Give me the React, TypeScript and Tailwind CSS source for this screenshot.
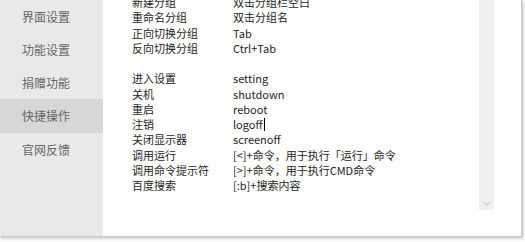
import React from 'react'

const menu = ['界面设置', '功能设置', '捐赠功能', '快捷操作', '官网反馈']

const rows: Array<[string, string] | null> = [
  ['新建分组', '双击分组栏空白'],
  ['重命名分组', '双击分组名'],
  ['正向切换分组', 'Tab'],
  ['反向切换分组', 'Ctrl+Tab'],
  null,
  ['进入设置', 'setting'],
  ['关机', 'shutdown'],
  ['重启', 'reboot'],
  ['注销', 'logoff'],
  ['关闭显示器', 'screenoff'],
  ['调用运行', '[<]+命令，用于执行「运行」命令'],
  ['调用命令提示符', '[>]+命令，用于执行CMD命令'],
  ['百度搜索', '[:b]+搜索内容'],
]

export default function App() {
  return (
    <div className="w-[525px] h-[242px] bg-[#fbfbfb] overflow-hidden" style={{ fontFamily: '"Noto Sans CJK SC", "Noto Sans", sans-serif' }}>
      <div className="flex w-[522px] h-[237px] bg-white border-r border-b border-[#c9c9c9] shadow-[1px_1px_3px_rgba(0,0,0,0.25)]">
        {/* Sidebar */}
        <div className="w-[103px] h-full bg-[#e9e9e9] flex flex-col">
          {menu.map((m, i) => (
            <div
              key={m}
              className={`h-[33px] flex items-center pl-[22px] text-[12px] text-[#666] ${i === 3 ? 'bg-[#d7d7d7] h-[34px]' : ''}`}
            >
              {m}
            </div>
          ))}
        </div>

        {/* Content */}
        <div className="flex-1 flex">
          <div className="flex-1 overflow-hidden pl-[29px]">
            <div className="mt-[-5px] text-[11px] leading-[15.25px] text-[#1e1e1e]">
              {rows.map((r, i) =>
                r ? (
                  <div key={i} className="flex whitespace-nowrap">
                    <span className="w-[101px] shrink-0">{r[0]}</span>
                    <span className="flex items-center">
                      {r[1]}
                      {r[1] === 'logoff' && <span className="inline-block w-px h-[13px] bg-black ml-px" />}
                    </span>
                  </div>
                ) : (
                  <div key={i} className="h-[15.25px]" />
                )
              )}
            </div>
          </div>
          {/* Scrollbar */}
          <div className="w-[15px] h-[210px] bg-[#f0f0f0] mr-[27px] flex flex-col justify-end items-center pb-[3px]">
            <svg width="8" height="5" viewBox="0 0 8 5" className="mb-[1px]">
              <path d="M0.5 0.5 L4 4 L7.5 0.5" fill="none" stroke="#c2c2c2" strokeWidth="1" />
            </svg>
          </div>
        </div>
      </div>
    </div>
  )
}
